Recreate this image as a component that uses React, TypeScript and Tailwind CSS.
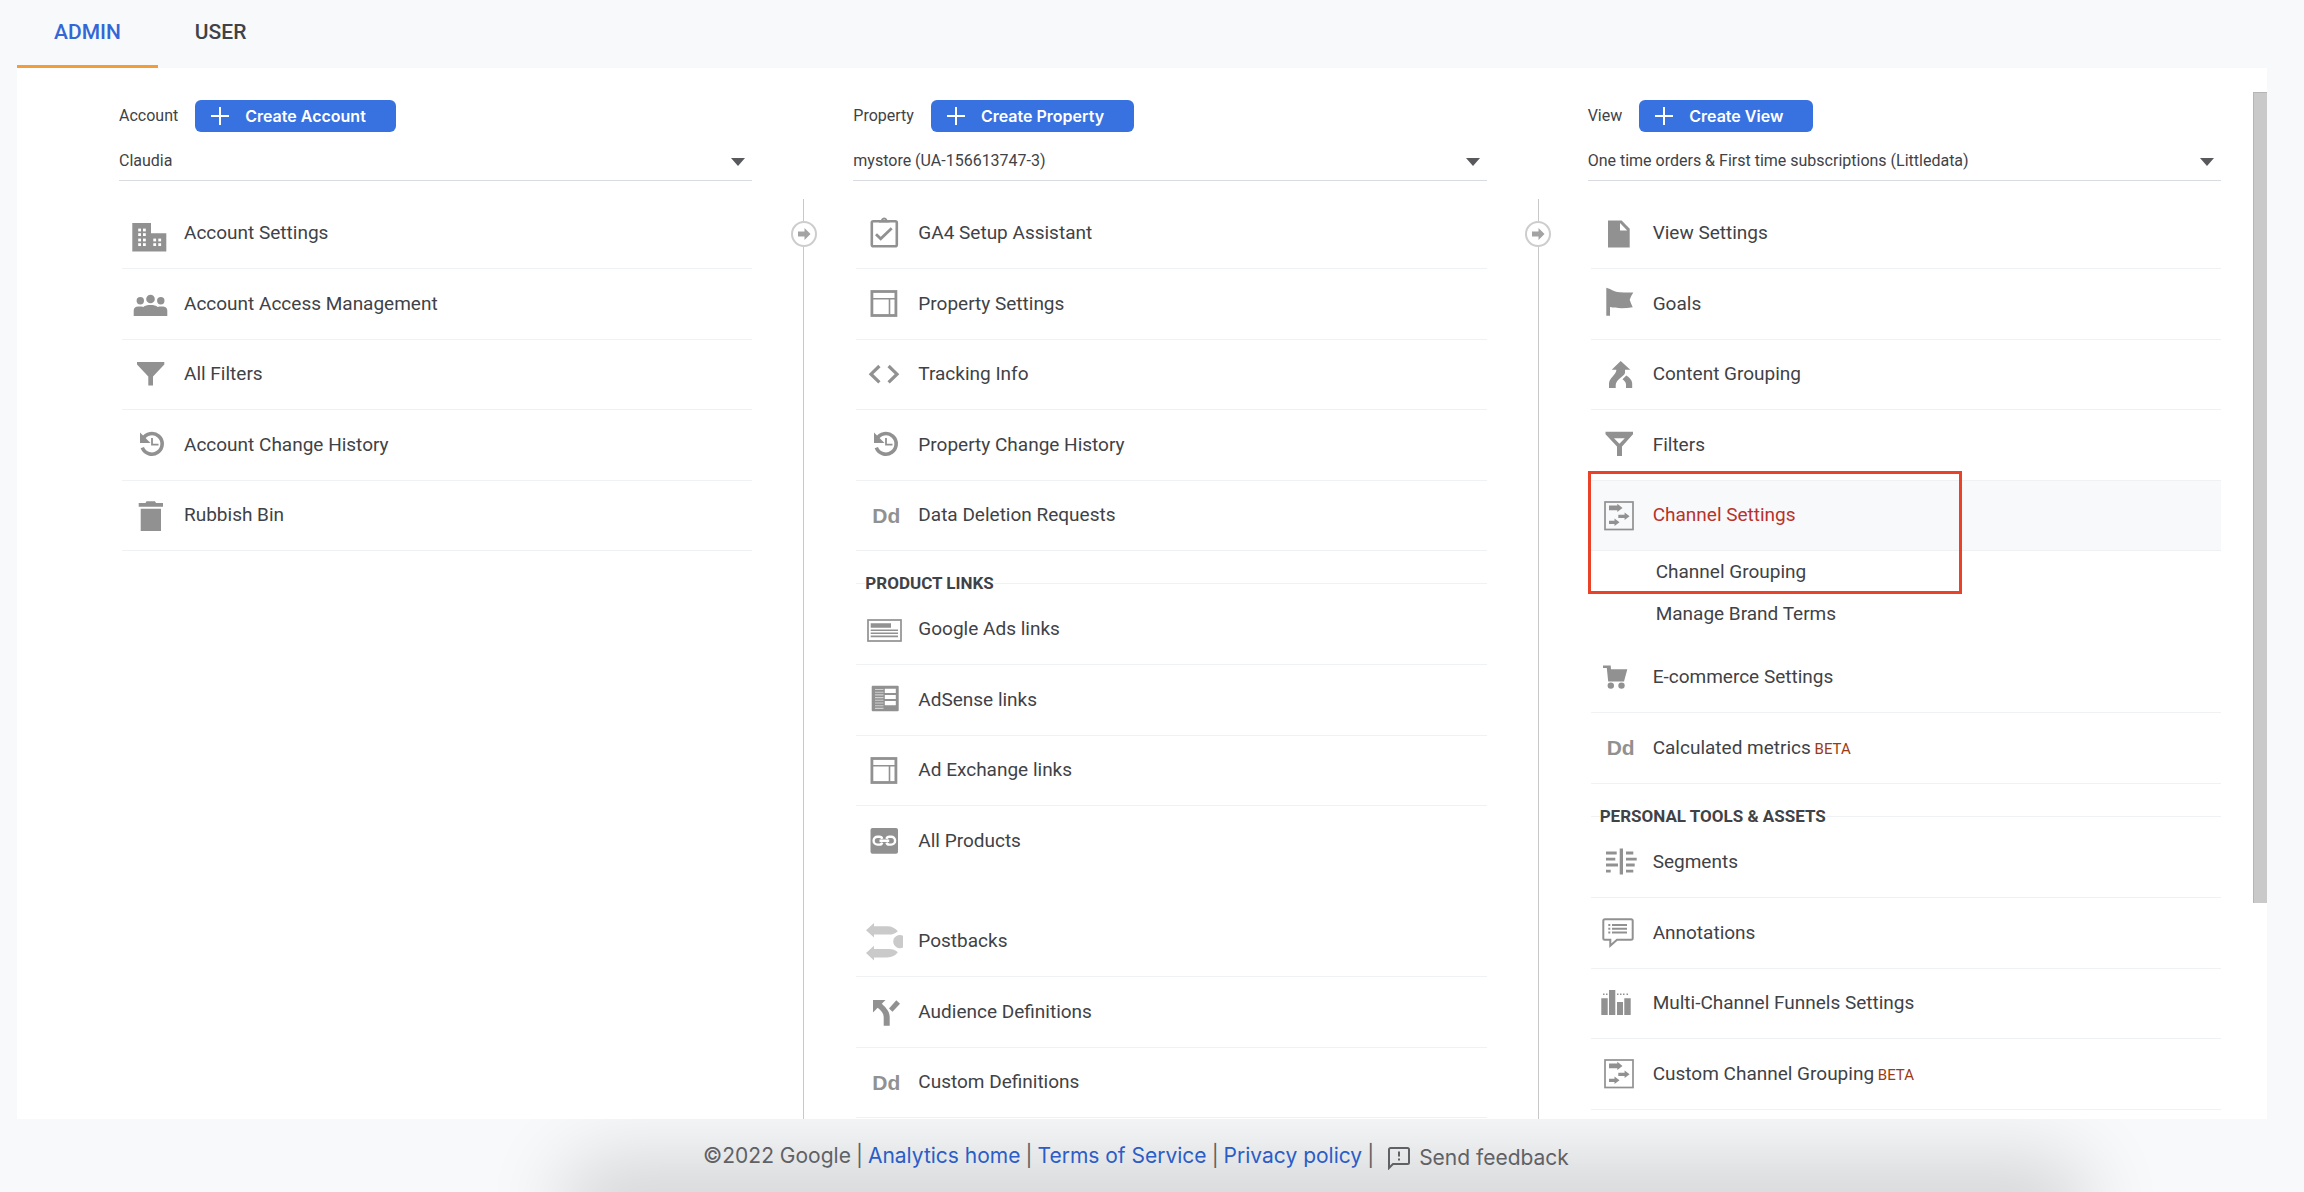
import { Fragment, useState, type ReactNode } from "react";

type IconName =
  | "building"
  | "people"
  | "funnel"
  | "funnelOutline"
  | "history"
  | "bin"
  | "clipboard"
  | "layout"
  | "code"
  | "dd"
  | "ads"
  | "adsense"
  | "link"
  | "postbacks"
  | "split"
  | "page"
  | "flag"
  | "merge"
  | "channels"
  | "cart"
  | "segments"
  | "note"
  | "bars";

interface Item {
  label: string;
  icon: IconName;
  beta?: boolean;
  children?: string[];
}

interface Group {
  title?: string;
  spaced?: boolean;
  items: Item[];
}

interface Column {
  id: string;
  label: string;
  create: string;
  options: string[];
  groups: Group[];
}

const columns: Column[] = [
  {
    id: "account",
    label: "Account",
    create: "Create Account",
    options: ["Claudia"],
    groups: [
      {
        items: [
          { label: "Account Settings", icon: "building" },
          { label: "Account Access Management", icon: "people" },
          { label: "All Filters", icon: "funnel" },
          { label: "Account Change History", icon: "history" },
          { label: "Rubbish Bin", icon: "bin" },
        ],
      },
    ],
  },
  {
    id: "property",
    label: "Property",
    create: "Create Property",
    options: ["mystore (UA-156613747-3)"],
    groups: [
      {
        items: [
          { label: "GA4 Setup Assistant", icon: "clipboard" },
          { label: "Property Settings", icon: "layout" },
          { label: "Tracking Info", icon: "code" },
          { label: "Property Change History", icon: "history" },
          { label: "Data Deletion Requests", icon: "dd" },
        ],
      },
      {
        title: "PRODUCT LINKS",
        items: [
          { label: "Google Ads links", icon: "ads" },
          { label: "AdSense links", icon: "adsense" },
          { label: "Ad Exchange links", icon: "layout" },
          { label: "All Products", icon: "link" },
        ],
      },
      {
        spaced: true,
        items: [
          { label: "Postbacks", icon: "postbacks" },
          { label: "Audience Definitions", icon: "split" },
          { label: "Custom Definitions", icon: "dd" },
        ],
      },
    ],
  },
  {
    id: "view",
    label: "View",
    create: "Create View",
    options: ["One time orders & First time subscriptions (Littledata)"],
    groups: [
      {
        items: [
          { label: "View Settings", icon: "page" },
          { label: "Goals", icon: "flag" },
          { label: "Content Grouping", icon: "merge" },
          { label: "Filters", icon: "funnelOutline" },
          {
            label: "Channel Settings",
            icon: "channels",
            children: ["Channel Grouping", "Manage Brand Terms"],
          },
        ],
      },
      {
        items: [
          { label: "E-commerce Settings", icon: "cart" },
          { label: "Calculated metrics", icon: "dd", beta: true },
        ],
      },
      {
        title: "PERSONAL TOOLS & ASSETS",
        items: [
          { label: "Segments", icon: "segments" },
          { label: "Annotations", icon: "note" },
          { label: "Multi-Channel Funnels Settings", icon: "bars" },
          { label: "Custom Channel Grouping", icon: "channels", beta: true },
        ],
      },
    ],
  },
];

const drawings: Record<Exclude<IconName, "dd">, ReactNode> = {
  building: (
    <>
      <path d="M3.3 9H22v10.3h15.3v18.2h-34z" />
      <g fill="#fff">
        {[16, 20.6, 26, 30.6].map((y) => (
          <Fragment key={y}>
            <rect x="9.2" y={y - 1.4} width="2.8" height="2.8" />
            <rect x="14" y={y - 1.4} width="2.8" height="2.8" />
          </Fragment>
        ))}
        {[26, 30.6].map((y) => (
          <Fragment key={y}>
            <rect x="24.3" y={y - 1.4} width="2.8" height="2.8" />
            <rect x="29.3" y={y - 1.4} width="2.8" height="2.8" />
          </Fragment>
        ))}
      </g>
    </>
  ),
  people: (
    <>
      <circle cx="21.5" cy="15" r="4.3" />
      <circle cx="11.3" cy="16.8" r="3.7" />
      <circle cx="31.8" cy="16.8" r="3.7" />
      <path d="M4.7 32v-5.5c0-2.5 2-3.7 4.6-3.9 2-.1 3.7.1 5 .3 1.7-1.3 4-1.8 7.2-1.8s5.5.5 7.2 1.8c1.3-.2 3-.4 5-.3 2.6.2 4.6 1.4 4.6 3.9V32z" />
    </>
  ),
  funnel: <path d="M8 7h27.3v2.5L24 21.5v9h-4.7v-9L8 9.5z" />,
  funnelOutline: (
    <path
      fillRule="evenodd"
      d="M7.5 6.700H35v2.600L24 21.500V31h-5v-9.500L7.500 9.300zM16 13.300l5.400 5.500 5.400-5.500z"
    />
  ),
  history: (
    <>
      <path
        d="M13.3 22.700a10.300 10.300 0 1 0 .5-8.700"
        fill="none"
        stroke="currentColor"
        strokeWidth="3.6"
      />
      <path d="M11 7.500V18h10.500z" />
      <path d="M23 13v6.700h6.500" fill="none" stroke="currentColor" strokeWidth="1.8" />
    </>
  ),
  bin: (
    <path d="M17.500 5.200H26l1 1.800h7v3.700H9.700V7h6.800zM11.700 12.800H32V35H11.700z" />
  ),
  clipboard: (
    <>
      <rect x="8.8" y="7.3" width="25" height="25" rx="1.5" fill="none" stroke="currentColor" strokeWidth="2.6" />
      <path
        fillRule="evenodd"
        d="M16 8.500c0-1.800 1-2.300 2-2.500.5-1.600 1.700-2.500 3.200-2.500s2.700.9 3.200 2.500c1 .2 2 .7 2 2.500zM21.200 5.500a1.200 1.200 0 1 0 0 2.400 1.200 1.200 0 0 0 0-2.400z"
      />
      <path d="M13 20.200l4.700 4.600 11-10.600" fill="none" stroke="currentColor" strokeWidth="2.8" />
    </>
  ),
  layout: (
    <>
      <rect x="8.9" y="7.5" width="24" height="24" fill="none" stroke="currentColor" strokeWidth="2.8" />
      <path d="M9 14.700h24M26.500 14.700v16" fill="none" stroke="currentColor" strokeWidth="1.6" />
    </>
  ),
  code: (
    <path
      d="M16.400 11l-8.400 8.200 8.400 8.200M25.600 11l8.400 8.200-8.400 8.200"
      fill="none"
      stroke="currentColor"
      strokeWidth="3.2"
    />
  ),
  ads: (
    <>
      <rect x="5" y="10" width="33" height="21" fill="none" stroke="currentColor" strokeWidth="1.7" />
      <path d="M7.700 13.300H28v4.400H7.700zM7.700 19.500H35v1.600H7.700zM7.700 22.500H35v1.600H7.700zM7.700 25.600H35v1.600H7.700z" />
    </>
  ),
  adsense: (
    <>
      <rect x="8.7" y="5.7" width="27" height="25.6" rx="1" />
      <path d="M21.800 8.700h11v4.200h-11zM21.800 14.900h11V19h-11zM21.800 21h11v4.200h-11z" fill="#fff" />
      <path
        d="M12 9.500h8.500M12 12.200h8.500M12 14.900h8.500M12 17.600h8.500M12 20.300h8.500M12 23h8.500M12 25.700h8.500M12 28.400h8.500"
        fill="none"
        stroke="#d0d0d0"
        strokeWidth="1.1"
      />
    </>
  ),
  link: (
    <>
      <rect x="7.5" y="7" width="27.5" height="25.7" rx="2" />
      <path
        d="M19.200 17.800c-.4-1.400-1.400-2-2.700-2h-2a3.900 3.900 0 0 0 0 7.800h2c1.300 0 2.300-.6 2.700-2M23.500 17.800c.4-1.400 1.400-2 2.700-2h2a3.900 3.900 0 0 1 0 7.800h-2c-1.300 0-2.300-.6-2.700-2M16.500 19.700h9.700"
        fill="none"
        stroke="#fff"
        strokeWidth="2.4"
      />
    </>
  ),
  postbacks: (
    <g fill="#cacaca">
      <path d="M3 8.300L11 1v3.200h13c5 0 8.500 2 10.800 5-2.500 2.300-5 3.400-8.800 3.400H11v3z" />
      <path d="M3 31l8-7.300v3.200h15c3.800 0 6.300 1 8.800 3.300-2.300 3.200-5.800 5.200-10.800 5.200H11v3.200z" />
      <path d="M40 13.800a6.600 6.600 0 1 0 0 11.600z" />
    </g>
  ),
  split: (
    <path d="M10 8h12.500l-3.700 3.800c5 4.600 7.900 8.200 7.900 13.200v8.700h-6V25c0-3.600-2.200-6-6-9.200L10 20.500zM33.300 8.200l3.700 3.500-7.500 8-3.500-3.200z" />
  ),
  page: (
    <>
      <path d="M10 6.500h13.700l8 8.200v18.800H10z" />
      <path d="M22 9l7.200 7.400H22z" fill="#fff" />
    </>
  ),
  flag: (
    <path d="M8.300 3.700l3.700 1.200c3 2 6 3 10 3.300 5 .4 9 .3 13.300.2-1.500 2.300-2.800 4.800-3.600 7.300.8 2.600 1.800 5 3 7.600-8 1.200-16 1.200-22.700-.3v8.700H8.300z" />
  ),
  merge: (
    <path d="M22.700 6l9.600 8.700H27v3.100c0 3.200-9.300 6.700-9.300 12.500V33H11v-4.500c0-5.500 7.400-9 7.400-13.800h-4.700zM28.300 20.500c3 2 5.900 4.600 5.900 8V33H28v-3.500c0-2.200-1.400-3.500-3.500-5.200z" />
  ),
  channels: (
    <>
      <rect x="7" y="6" width="28" height="27.5" fill="none" stroke="currentColor" strokeWidth="1.7" />
      <path d="M11 9.500h8.300V7.700l5.200 4.200-5.200 4.200v-1.900H11z" />
      <path d="M20.300 18.700h6.300v-2.200l5 3.800-5 3.800v-2.200h-6.300zM11 24.700h5.500v-2.200l5 3.800-5 3.800v-2.200H11z" />
    </>
  ),
  cart: (
    <>
      <path d="M5 7.500h7.700l.3 3.700h16.300L26 23.500H10.200L8.800 10H5z" />
      <circle cx="12.8" cy="27.6" r="3.2" />
      <circle cx="23.5" cy="27.6" r="3.2" />
    </>
  ),
  segments: (
    <path d="M21.700 5.500H25v26h-3.300zM8 8.600h10.700v2.800H8zM8 14.800h9.300v2.800H8zM8 20.600h12v2.800H8zM8 26.700h4.700v2.800H8zM28 8.600h7.300v2.800H28zM28 14.800h10.700v2.800H28zM28 20.600h8.700v2.800H28zM28 26.700h7.300v2.800H28z" />
  ),
  note: (
    <>
      <path
        d="M7 6.300h26c1 0 1.700.7 1.700 1.500v17.400c0 .8-.7 1.500-1.700 1.500H19l-6.700 6v-6H7c-1 0-1.700-.7-1.700-1.500V7.800C5.300 7 6 6.300 7 6.300z"
        fill="none"
        stroke="currentColor"
        strokeWidth="2"
      />
      <path d="M10.300 11h2v2h-2zM14 11h15v2H14zM10.300 14.700h2v2h-2zM14 14.700h15v2H14zM10.300 18.400h2v2h-2zM14 18.400h15v2H14z" />
    </>
  ),
  bars: (
    <path d="M3.300 14.200h6.400V31H3.300zM11 6h6.300v25H11zM19 18h6v13h-6zM26.300 14.200h6.400V31h-6.400zM5 9.500h1.500V11H5zM8 9.500h1.500V11H8zM19 9.500h1.500V11H19zM22 9.500h1.500V11H22zM25 9.500h1.500V11H25zM28.500 9.500H30V11h-1.500z" />
  ),
};

function RowIcon({ name }: { name: IconName }) {
  if (name === "dd") {
    return (
      <span
        aria-hidden="true"
        className="w-10 shrink-0 pl-[9px] font-['Liberation_Sans',sans-serif] text-[21px] leading-10 font-bold text-[#919191]"
      >
        Dd
      </span>
    );
  }
  return (
    <svg viewBox="0 0 40 40" className="size-10 shrink-0 fill-current text-[#919191]" aria-hidden="true">
      {drawings[name]}
    </svg>
  );
}

interface RowProps {
  item: Item;
  tall: boolean;
  last: boolean;
}

function Row({ item, tall, last }: RowProps) {
  const open = Boolean(item.children);
  return (
    <li className="relative">
      <a
        href="#"
        className={`ml-[3px] flex items-center gap-[15px] border-b pl-[7px] ${
          tall ? "h-[71px]" : "h-[70px]"
        } ${last ? "border-transparent" : "border-[#f0f1f2]"} ${
          open ? "bg-[#f8f9fb] text-[#b8312b]" : ""
        }`}
      >
        <RowIcon name={item.icon} />
        <span>
          {item.label}
          {item.beta && <span className="text-[15px] text-[#9c3a14]"> BETA</span>}
        </span>
      </a>
      {item.children && (
        <>
          <ul className="pb-2 pl-[68px]">
            {item.children.map((child) => (
              <li key={child}>
                <a href="#" className="flex h-[42px] items-center">
                  {child}
                </a>
              </li>
            ))}
          </ul>
          <div className="pointer-events-none absolute -top-[10px] left-0 h-[123px] w-[374px] border-3 border-[#ea4228]" />
        </>
      )}
    </li>
  );
}

function AdminColumn({ column }: { column: Column }) {
  return (
    <section className="min-w-0">
      <div className="flex h-8 items-center text-base">
        <label htmlFor={column.id}>{column.label}</label>
        <button
          type="button"
          className="ml-[17px] flex h-8 items-center rounded-md bg-[#3871e0] pr-[30px] pl-4 font-[Inter,sans-serif] text-base font-semibold text-white"
        >
          <svg viewBox="0 0 18 18" className="mr-4 size-[18px]" aria-hidden="true">
            <path d="M9 0v18M0 9h18" fill="none" stroke="#fff" strokeWidth="2" />
          </svg>
          {column.create}
        </button>
      </div>
      <div className="relative mt-2">
        <select
          id={column.id}
          className="h-[41px] w-full appearance-none border-b border-[#d8dbe0] bg-transparent pt-0.5 text-base outline-none"
        >
          {column.options.map((option) => (
            <option key={option}>{option}</option>
          ))}
        </select>
        <svg
          viewBox="0 0 14 8"
          className="pointer-events-none absolute top-[18px] right-[7px] h-2 w-[14px]"
          aria-hidden="true"
        >
          <path d="M0 0h14L7 8z" fill="#58595d" />
        </svg>
      </div>
      <div className="mt-[18px]">
        {column.groups.map((group, g) => (
          <div key={g} className={group.spaced ? "mt-[30px]" : ""}>
            {group.title && (
              <div className="flex h-11 items-center pt-5">
                <span className="ml-[3px] h-px w-[9px] bg-[#f0f1f2]" />
                <h2 className="text-[17px] leading-6 font-bold">{group.title}</h2>
                <span className="h-px flex-1 bg-[#f0f1f2]" />
              </div>
            )}
            <ul>
              {group.items.map((item, i) => (
                <Row
                  key={item.label}
                  item={item}
                  tall={i % 2 === 1}
                  last={item.label === "All Products"}
                />
              ))}
            </ul>
          </div>
        ))}
      </div>
    </section>
  );
}

function Separator() {
  return (
    <div className="flex flex-col items-center pt-[99px] pl-0.5">
      <span className="h-[22px] w-px bg-[#c8c8c8]" />
      <svg viewBox="0 0 26 26" className="size-[26px]" aria-hidden="true">
        <circle cx="13" cy="13" r="12" fill="#fff" stroke="#cdcdcd" strokeWidth="2" />
        <path d="M7 10.500h6.500V7l6 6-6 6v-3.500H7z" fill="#a3a3a3" />
      </svg>
      <span className="w-px flex-1 bg-[#c8c8c8]" />
    </div>
  );
}

function Footer() {
  const link = "text-[#2a5dc7]";
  return (
    <footer className="relative flex h-[73px] items-center justify-center overflow-hidden pr-8 font-[Inter,sans-serif] text-[21px] text-[#5f6165]">
      <div className="absolute right-[11%] -bottom-10 left-[26%] h-10 rounded-xl shadow-[0_0_80px_36px_rgba(0,0,0,0.14)]" />
      <div className="relative flex items-center gap-[5px]">
        <span>©2022 Google</span>
        <span>|</span>
        <a href="#" className={link}>Analytics home</a>
        <span>|</span>
        <a href="#" className={link}>Terms of Service</a>
        <span>|</span>
        <a href="#" className={link}>Privacy policy</a>
        <span>|</span>
        <button type="button" className="ml-2 flex items-center gap-2 pt-1">
          <svg viewBox="0 0 24 24" className="size-6" aria-hidden="true">
            <path d="M2 22V3.500C2 2.700 2.700 2 3.500 2h17c.8 0 1.500.7 1.500 1.500v13c0 .8-.7 1.500-1.500 1.500H6z" fill="none" stroke="currentColor" strokeWidth="2" />
            <path d="M11 5.500h2v5h-2zM11 12.500h2v2h-2z" fill="currentColor" />
          </svg>
          Send feedback
        </button>
      </div>
    </footer>
  );
}

export default function App() {
  const [tab, setTab] = useState("ADMIN");
  return (
    <div className="flex min-h-screen flex-col bg-[#f8f9fb] font-[Roboto,sans-serif] text-[19px] text-[#3f4246]">
      <nav className="flex pl-[17px]">
        {["ADMIN", "USER"].map((name) => (
          <button
            key={name}
            type="button"
            onClick={() => setTab(name)}
            className={`h-[68px] border-b-3 px-[37px] text-[21px] font-medium ${
              tab === name ? "border-[#f29d38] text-[#3367d6]" : "border-transparent"
            }`}
          >
            {name}
          </button>
        ))}
      </nav>
      <main className="mr-[37px] ml-[17px] flex flex-1 bg-white">
        <div className="grid flex-1 grid-cols-[1fr_101px_1fr_101px_1fr] pt-8 pr-8 pl-[102px]">
          {columns.map((column, i) => (
            <Fragment key={column.id}>
              {i > 0 && <Separator />}
              <AdminColumn column={column} />
            </Fragment>
          ))}
        </div>
        <div className="w-[14px] pt-6">
          <div className="h-[79%] border-t border-l border-[#b5b5b5] bg-[#c9c9c9]" />
        </div>
      </main>
      <Footer />
    </div>
  );
}
